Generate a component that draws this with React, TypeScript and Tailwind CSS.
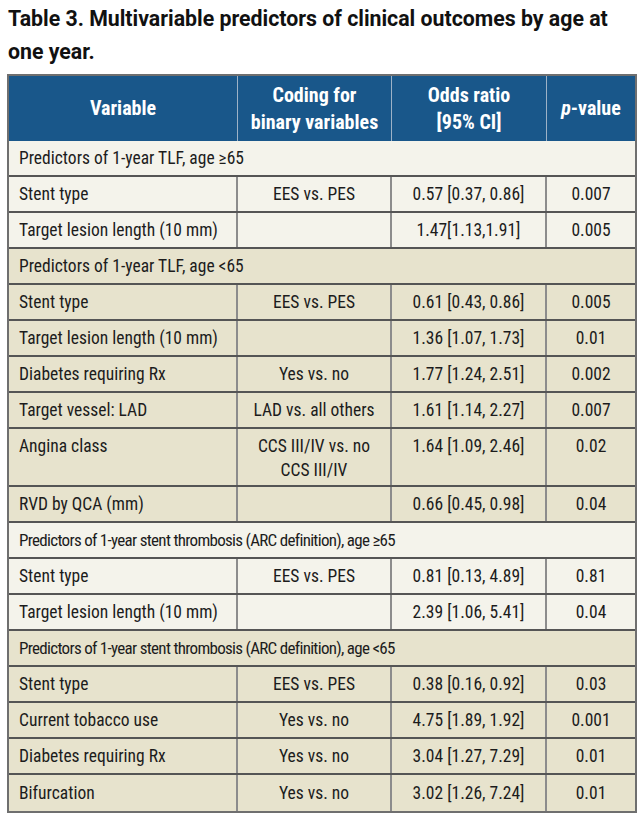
import React from "react";

type DataR = { kind: "data"; v: string; c: string | string[]; o: string; p: string; tall?: boolean };
type Row = { kind: "section"; text: string; narrow?: boolean } | DataR;

type Group = { bg: string; rows: Row[] };

const groups: Group[] = [
  {
    bg: "bg-[#f4f3eb]",
    rows: [
      { kind: "section", text: "Predictors of 1-year TLF, age \u226565" },
      { kind: "data", v: "Stent type", c: "EES vs. PES", o: "0.57 [0.37, 0.86]", p: "0.007" },
      { kind: "data", v: "Target lesion length (10 mm)", c: "", o: "1.47[1.13,1.91]", p: "0.005" },
    ],
  },
  {
    bg: "bg-[#e7e3cd]",
    rows: [
      { kind: "section", text: "Predictors of 1-year TLF, age <65" },
      { kind: "data", v: "Stent type", c: "EES vs. PES", o: "0.61 [0.43, 0.86]", p: "0.005" },
      { kind: "data", v: "Target lesion length (10 mm)", c: "", o: "1.36 [1.07, 1.73]", p: "0.01" },
      { kind: "data", v: "Diabetes requiring Rx", c: "Yes vs. no", o: "1.77 [1.24, 2.51]", p: "0.002" },
      { kind: "data", v: "Target vessel: LAD", c: "LAD vs. all others", o: "1.61 [1.14, 2.27]", p: "0.007" },
      { kind: "data", v: "Angina class", c: ["CCS III/IV vs. no", "CCS III/IV"], o: "1.64 [1.09, 2.46]", p: "0.02", tall: true },
      { kind: "data", v: "RVD by QCA (mm)", c: "", o: "0.66 [0.45, 0.98]", p: "0.04" },
    ],
  },
  {
    bg: "bg-[#f4f3eb]",
    rows: [
      { kind: "section", text: "Predictors of 1-year stent thrombosis (ARC definition), age \u226565", narrow: true },
      { kind: "data", v: "Stent type", c: "EES vs. PES", o: "0.81 [0.13, 4.89]", p: "0.81" },
      { kind: "data", v: "Target lesion length (10 mm)", c: "", o: "2.39 [1.06, 5.41]", p: "0.04" },
    ],
  },
  {
    bg: "bg-[#e7e3cd]",
    rows: [
      { kind: "section", text: "Predictors of 1-year stent thrombosis (ARC definition), age <65", narrow: true },
      { kind: "data", v: "Stent type", c: "EES vs. PES", o: "0.38 [0.16, 0.92]", p: "0.03" },
      { kind: "data", v: "Current tobacco use", c: "Yes vs. no", o: "4.75 [1.89, 1.92]", p: "0.001" },
      { kind: "data", v: "Diabetes requiring Rx", c: "Yes vs. no", o: "3.04 [1.27, 7.29]", p: "0.01" },
      { kind: "data", v: "Bifurcation", c: "Yes vs. no", o: "3.02 [1.26, 7.24]", p: "0.01" },
    ],
  },
];

function DataRow({ r, last }: { r: DataR; last: boolean }) {
  const h = r.tall ? "h-[58px]" : "h-[36px]";
  const al = r.tall ? "items-start pt-[5px]" : "items-center";
  const border = last ? "" : "border-b-2 border-[#555]";
  return (
    <div className={`flex ${h} ${border}`}>
      <div className={`flex ${al} w-[229px] border-r-2 border-[#8c8c8c] pl-[10px] whitespace-nowrap`}>{r.v}</div>
      <div className={`flex ${al} justify-center w-[154px] border-r-2 border-[#8c8c8c] text-center whitespace-nowrap`}>
        {Array.isArray(r.c) ? (
          <div>
            {r.c.map((x, i) => (
              <div key={i}>{x}</div>
            ))}
          </div>
        ) : (
          <div>{r.c}</div>
        )}
      </div>
      <div className={`flex ${al} justify-center w-[155px] border-r-2 border-[#8c8c8c] whitespace-nowrap`}>{r.o}</div>
      <div className={`flex ${al} justify-center w-[88px] whitespace-nowrap`}>{r.p}</div>
    </div>
  );
}

export default function App() {
  return (
    <div className="w-[642px] h-[817px] bg-white font-['Roboto',sans-serif] text-[#1c1c1c]">
      <div className="pl-[8px] pt-[2px] text-[21.3px] leading-[33px] font-bold text-[#111] whitespace-nowrap">
        Table 3. Multivariable predictors of clinical outcomes by age at
        <br />
        one year.
      </div>
      <div className="ml-[7px] mt-[6px] w-[630px] border-2 border-[#6f6f6f]">
        <div className="flex h-[65px] bg-[#19578a] text-white font-bold text-[20px] leading-[27px] font-stretch-condensed">
          <div className="w-[229px] border-r border-[#9db2c7] flex items-center justify-center">Variable</div>
          <div className="w-[154px] border-r border-[#9db2c7] flex items-center justify-center text-center">
            <div>
              Coding for
              <br />
              binary variables
            </div>
          </div>
          <div className="w-[155px] border-r border-[#9db2c7] flex items-center justify-center text-center">
            <div>
              Odds ratio
              <br />
              [95% CI]
            </div>
          </div>
          <div className="flex-1 flex items-center justify-center">
            <span>
              <i>p</i>-value
            </span>
          </div>
        </div>
        <div className="text-[17.5px] leading-[24px] font-stretch-condensed">
          {groups.map((g, gi) => (
            <div key={gi} className={g.bg}>
              {g.rows.map((r, ri) => {
                const last = gi === groups.length - 1 && ri === g.rows.length - 1;
                if (r.kind === "section") {
                  return (
                    <div
                      key={ri}
                      className={`h-[36px] flex items-center pl-[10px] border-b-2 border-[#555] whitespace-nowrap ${
                        r.narrow ? "text-[17px] tracking-[-0.7px]" : ""
                      }`}
                    >
                      {r.text}
                    </div>
                  );
                }
                return <DataRow key={ri} r={r} last={last} />;
              })}
            </div>
          ))}
        </div>
      </div>
    </div>
  );
}
